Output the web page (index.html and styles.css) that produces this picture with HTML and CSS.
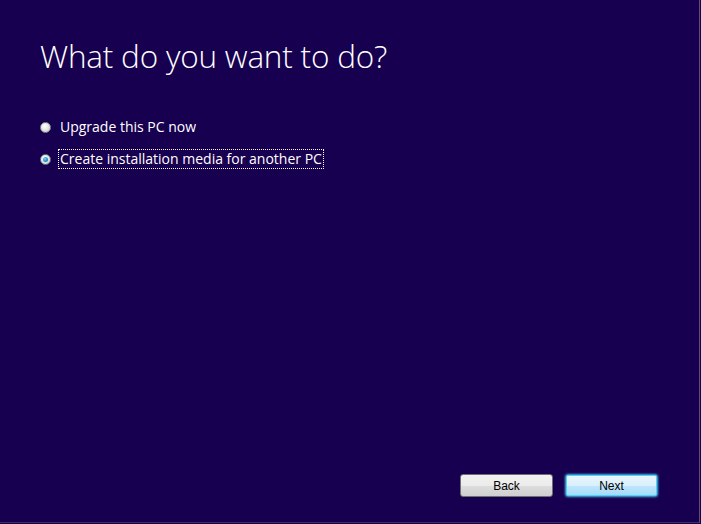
FILE: index.html
```html
<!DOCTYPE html>
<html>
<head>
<meta charset="utf-8">
<link rel="stylesheet" href="styles.css">
</head>
<body>
<div class="page">
  <h1 class="title">What do you want to do?</h1>
  <div class="options">
    <label class="option">
      <span class="radio"></span>
      <span class="label">Upgrade this PC now</span>
    </label>
    <label class="option">
      <span class="radio checked"><span class="dot"></span></span>
      <span class="label focus">Create installation media for another PC</span>
    </label>
  </div>
  <div class="spacer"></div>
  <div class="buttons">
    <button class="btn">Back</button>
    <button class="btn primary">Next</button>
  </div>
</div>
</body>
</html>
```
FILE: styles.css
```css
html, body {
  margin: 0;
  padding: 0;
  background: #180050;
}
.page {
  width: 700px;
  height: 523px;
  box-sizing: border-box;
  border-right: 1px solid #5a5270;
  border-bottom: 1px solid #3a3458;
  display: flex;
  flex-direction: column;
  padding: 35px 0 0 40px;
}
.title {
  margin: 0;
  font-family: "Open Sans", sans-serif;
  font-weight: 300;
  font-size: 31.5px;
  line-height: 42px;
  color: #ffffff;
  letter-spacing: -0.2px;
}
.options {
  margin-top: 40px;
  display: flex;
  flex-direction: column;
  gap: 12px;
}
.option {
  display: flex;
  align-items: center;
  height: 20px;
  font-family: "Open Sans", sans-serif;
  font-size: 14px;
  color: #ffffff;
}
.radio {
  width: 11px;
  height: 11px;
  border-radius: 50%;
  box-sizing: border-box;
  border: 1px solid #8a8a8a;
  background: radial-gradient(circle at 40% 35%, #ffffff 0%, #e8e8e8 45%, #c4c4c4 100%);
  margin-right: 8px;
  display: flex;
  align-items: center;
  justify-content: center;
}
.radio.checked {
  border-color: #6a7a8a;
}
.dot {
  width: 5px;
  height: 5px;
  border-radius: 50%;
  background: radial-gradient(circle at 40% 35%, #7fd4f4 0%, #1a8ec4 60%, #0c5a88 100%);
}
.label {
  padding: 0 1px;
  line-height: 18px;
}
.label.focus {
  outline: 1px dotted #ffffff;
  outline-offset: 0;
}
.spacer {
  flex: 1;
}
.buttons {
  display: flex;
  justify-content: flex-end;
  gap: 12px;
  padding-right: 41px;
  padding-bottom: 25px;
}
.btn {
  width: 93px;
  height: 23px;
  box-sizing: border-box;
  border: 1px solid #707070;
  border-radius: 3px;
  background: linear-gradient(#f2f2f2 0%, #ebebeb 50%, #dddddd 51%, #cfcfcf 100%);
  font-family: "Liberation Sans", sans-serif;
  font-size: 12px;
  color: #000000;
  padding: 0;
}
.btn.primary {
  border: 1px solid #3c7fb1;
  box-shadow: 0 0 0 1px #48d2ff inset, 0 0 2px #48d2ff;
  background: linear-gradient(#eaf6fd 0%, #d9f0fc 50%, #bee6fd 51%, #a7d9f5 100%);
}
```
